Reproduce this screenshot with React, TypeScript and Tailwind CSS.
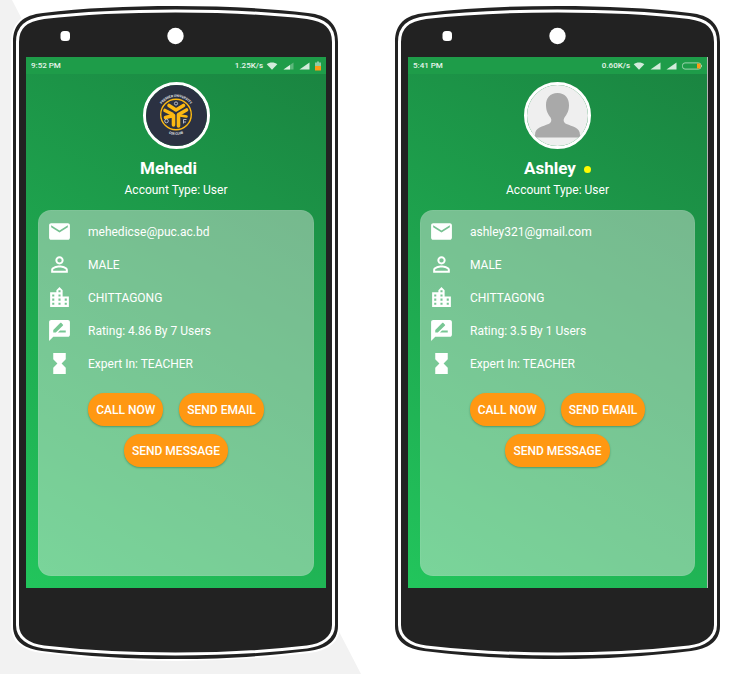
import type { ReactNode } from "react";
import { MdEmail, MdHourglassFull, MdLocationCity, MdPersonOutline, MdRateReview } from "react-icons/md";

type Profile = {
  name: string;
  online: boolean;
  time: string;
  speed: string;
  email: string;
  rating: string;
  avatar: ReactNode;
  battery: ReactNode;
  weakSignal: boolean;
  screenEdge: string;
};

function PhoneFrame() {
  return (
    <svg
      className="absolute inset-0 h-full w-full overflow-visible"
      viewBox="0 0 325 653"
      preserveAspectRatio="none"
      aria-hidden="true"
    >
      <path
        d="M0 36C0 18 10 9 30 7C70 2 115 0 162.500 0C210 0 255 2 295 7C315 9 325 18 325 36V620C325 636 312 643 296 645C250 650.500 210 653 162.500 653C115 653 75 650.500 29 645C13 643 0 636 0 620Z"
        fill="#222222"
        stroke="#ffffff"
        strokeWidth="4"
        paintOrder="stroke"
      />
      <path
        d="M4.500 36C4.500 21 13 14 31 11.500C70 7 115 5 162.500 5C210 5 255 7 294 11.500C312 14 320.500 21 320.500 36V619C320.500 632 309 639 294 641C250 646 210 648 162.500 648C115 648 75 646 31 641C16 639 4.500 632 4.500 619Z"
        fill="none"
        stroke="#ffffff"
        strokeWidth="3"
      />
      <rect x="47.500" y="25" width="9.500" height="10" rx="3.500" fill="#fff" />
      <circle cx="162.500" cy="30" r="8.200" fill="#fff" />
    </svg>
  );
}

function WifiIcon() {
  return (
    <svg className="h-2 w-3" viewBox="0 0 12 8" aria-hidden="true">
      <path d="M6 7.700L.7 2.300C3.500-.1 8.500-.1 11.300 2.300Z" fill="currentColor" />
    </svg>
  );
}

function SignalIcon({ weak }: { weak: boolean }) {
  return (
    <svg className="h-2 w-[11px]" viewBox="0 0 11 8" aria-hidden="true">
      <path d="M.5 7.500L10.500.5V7.500Z" fill="currentColor" opacity={weak ? 0.35 : 1} />
      {weak && <path d="M.5 7.500L7 3V7.500Z" fill="currentColor" />}
    </svg>
  );
}

const uprightBattery = (
  <svg className="h-[10px] w-[6px]" viewBox="0 0 6 10" aria-hidden="true">
    <path d="M0 1.500H2V.5H4V1.500H6V5H0Z" fill="#8fcca4" />
    <path d="M0 5H6V9.500H0Z" fill="#ff9a16" />
  </svg>
);

const flatBattery = (
  <svg className="h-[8px] w-[20px]" viewBox="0 0 20 8" aria-hidden="true">
    <rect x=".5" y=".9" width="18.500" height="6.200" rx="2.500" fill="none" stroke="#9bd3ad" />
    <path d="M15 1.500H17.500Q18.500 1.500 18.500 2.500V5.500Q18.500 6.500 17.500 6.500H15Z" fill="#ff9a16" />
    <path d="M19.500 3V5" stroke="#9bd3ad" />
  </svg>
);

const clubLogo = (
  <svg className="h-full w-full" viewBox="0 0 61 61" role="img" aria-label="Club logo">
    <defs>
      <path id="logo-top" d="M12.300 29.500A17.700 17.700 0 0 1 47.700 29.500" />
      <path id="logo-bottom" d="M9.700 29.500A20.300 20.300 0 0 0 50.300 29.500" />
    </defs>
    <rect width="61" height="61" fill="#2b3142" />
    <g fill="#e8e8ec" fontFamily="Roboto, sans-serif" fontWeight="700" fontSize="3.300" textAnchor="middle">
      <text>
        <textPath href="#logo-top" startOffset="50%">PREMIER UNIVERSITY</textPath>
      </text>
      <text>
        <textPath href="#logo-bottom" startOffset="50%">CSE CLUB</textPath>
      </text>
    </g>
    <circle cx="30" cy="29.500" r="15.300" fill="none" stroke="#fcb912" strokeWidth="1.400" />
    <g fill="none" stroke="#fcb912" strokeLinecap="round" strokeLinejoin="round" strokeWidth="3.600">
      <path d="M23 20.500L30 25L37.500 20.500" />
      <path d="M19 25.500L26 29" />
      <path d="M40.500 25L32.500 29.500V41" />
      <path d="M19.500 32.500L27.500 30.500V40" />
      <path d="M34 30.500L40.500 31.500" strokeWidth="2.600" />
    </g>
    <g fill="none" stroke="#d9dbe2" strokeWidth=".8">
      <circle cx="30" cy="18.500" r="1.600" />
      <circle cx="20.500" cy="36" r="1.800" />
      <path d="M37.500 34.500H40.500M37.500 37H40M37.500 34.500V38.500" />
    </g>
  </svg>
);

const placeholder = (
  <svg className="h-full w-full" viewBox="0 0 61 61" role="img" aria-label="No photo">
    <rect width="61" height="61" fill="#efefef" />
    <path
      d="M30.500 8C38 8 42 13 42 20C42 26 40 29 37.500 32.500C36 35 36.500 37.500 39.500 39C45 41.500 53 42 53 50V52.500H8V50C8 42 16 41.500 21.500 39C24.500 37.500 25 35 23.500 32.500C21 29 19 26 19 20C19 13 23 8 30.500 8Z"
      fill="#a9a9a9"
    />
  </svg>
);

function Row({ icon, children }: { icon: ReactNode; children: ReactNode }) {
  return (
    <li className="flex h-[33px] items-center gap-4 text-xs">
      <span className="shrink-0 text-[25px]">{icon}</span>
      <span>{children}</span>
    </li>
  );
}

function ActionButton({ children }: { children: ReactNode }) {
  return (
    <button
      type="button"
      className="h-[33px] rounded-2xl bg-[#ff9812] px-2 text-xs font-medium whitespace-nowrap shadow-[0_1px_2px_rgba(0,70,30,0.35)]"
    >
      {children}
    </button>
  );
}

function Phone({ profile }: { profile: Profile }) {
  return (
    <section className="relative min-w-[300px] flex-1 pt-[51px] pr-3 pb-[71px] pl-[13px]">
      <PhoneFrame />
      <div
        className={`relative bg-linear-[30deg] from-[#22c55c] to-[#1a8340] pb-3 text-white ${profile.screenEdge}`}
      >
        <div className="flex h-[17px] items-center justify-between bg-[#1e9c49] px-[5px] text-[8px] font-medium text-white/90">
          <span>{profile.time}</span>
          <div className="flex items-center gap-[3px]">
            <span>{profile.speed}</span>
            <div className="flex items-center gap-[5px] text-white/80">
              <WifiIcon />
              <SignalIcon weak={profile.weakSignal} />
              <SignalIcon weak={false} />
              {profile.battery}
            </div>
          </div>
        </div>

        <header className="flex flex-col items-center pt-2">
          <div className="size-[67px] overflow-hidden rounded-full border-3 border-white">{profile.avatar}</div>
          <div className="mt-2 flex h-6 items-center gap-2">
            <h2 className="text-[17px] font-bold">{profile.name}</h2>
            <span className={profile.online ? "size-[7px] rounded-full bg-[#fffb00]" : "size-[7px]"} />
          </div>
          <p className="text-xs leading-[18px]">Account Type: User</p>
        </header>

        <div className="mx-3 mt-[11px] rounded-[13px] border border-white/5 bg-[#ebebeb]/44 pt-1 pb-[108px]">
          <ul className="px-2">
            <Row icon={<MdEmail />}>{profile.email}</Row>
            <Row icon={<MdPersonOutline />}>MALE</Row>
            <Row icon={<MdLocationCity />}>CHITTAGONG</Row>
            <Row icon={<MdRateReview />}>{profile.rating}</Row>
            <Row icon={<MdHourglassFull />}>Expert In: TEACHER</Row>
          </ul>
          <div className="mt-[13px] flex flex-col items-center gap-2">
            <div className="flex gap-4">
              <ActionButton>CALL NOW</ActionButton>
              <ActionButton>SEND EMAIL</ActionButton>
            </div>
            <ActionButton>SEND MESSAGE</ActionButton>
          </div>
        </div>
      </div>
    </section>
  );
}

const profiles: Profile[] = [
  {
    name: "Mehedi",
    online: false,
    time: "9:52 PM",
    speed: "1.25K/s",
    email: "mehedicse@puc.ac.bd",
    rating: "Rating: 4.86 By 7 Users",
    avatar: clubLogo,
    battery: uprightBattery,
    weakSignal: true,
    screenEdge: "",
  },
  {
    name: "Ashley",
    online: true,
    time: "5:41 PM",
    speed: "0.60K/s",
    email: "ashley321@gmail.com",
    rating: "Rating: 3.5 By 1 Users",
    avatar: placeholder,
    battery: flatBattery,
    weakSignal: false,
    screenEdge: "border-r border-[#b5b5b5]",
  },
];

export default function App() {
  return (
    <main className="relative isolate min-h-screen overflow-hidden bg-white font-[Roboto,sans-serif]">
      <svg
        className="absolute inset-0 -z-10 h-full w-full"
        viewBox="0 0 733 674"
        preserveAspectRatio="none"
        aria-hidden="true"
      >
        <path d="M0 0H12L361 674H0Z" fill="#f2f2f2" />
      </svg>
      <div className="flex flex-wrap gap-x-[57px] gap-y-8 px-[13px] pt-[6px] pb-[15px]">
        {profiles.map((profile) => (
          <Phone key={profile.name} profile={profile} />
        ))}
      </div>
    </main>
  );
}
